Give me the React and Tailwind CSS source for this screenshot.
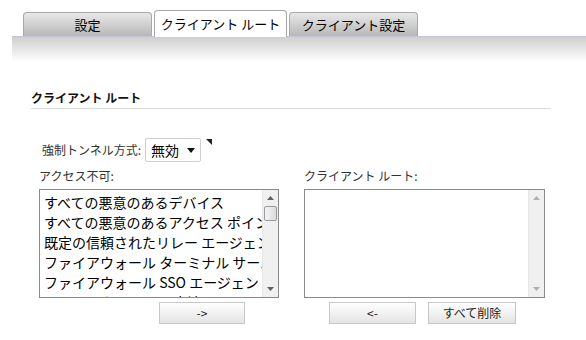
import React from 'react';

const font = { fontFamily: '"Noto Sans CJK JP", "Noto Sans", sans-serif' };

const Tab = ({ label, active }) => (
    <div
        className={
            active
                ? 'h-[27px] w-[133px] -mb-px flex items-center justify-center rounded-t-[4px] border border-b-0 border-[#a8a8a8] bg-white text-[13px] text-black z-10'
                : 'h-[24px] w-[129px] flex items-center justify-center rounded-t-[4px] border border-b-0 border-[#a8a8a8] bg-gradient-to-b from-[#e8e8e8] to-[#b8b8b8] text-[13px] text-black'
        }
    >
        {label}
    </div>
);

const ScrollBar = ({ thumb }) => (
    <div className="w-[16px] h-full flex flex-col items-center bg-[#f0f0f0] border-l border-[#e6e6e6]">
        <div className="h-[16px] flex items-center justify-center">
            <svg width="7" height="4" viewBox="0 0 7 4"><path d="M0 4 L3.5 0 L7 4 Z" fill={thumb ? '#606060' : '#b0b0b0'} /></svg>
        </div>
        {thumb && <div className="w-[13px] h-[15px] rounded-[2px] border border-[#9a9a9a] bg-gradient-to-r from-[#f4f4f4] to-[#dcdcdc]" />}
        <div className="flex-1" />
        <div className="h-[16px] flex items-center justify-center">
            <svg width="7" height="4" viewBox="0 0 7 4"><path d="M0 0 L3.5 4 L7 0 Z" fill={thumb ? '#606060' : '#b0b0b0'} /></svg>
        </div>
    </div>
);

const Button = ({ label, w }) => (
    <div className={`${w} h-[22px] flex items-center justify-center border border-[#c8c8c8] bg-gradient-to-b from-white to-[#e4e4e4] text-[12px] text-[#222]`}>
        {label}
    </div>
);

const items = [
    'すべての悪意のあるデバイス',
    'すべての悪意のあるアクセス ポイント',
    '既定の信頼されたリレー エージェント',
    'ファイアウォール ターミナル サーバ',
    'ファイアウォール SSO エージェント',
];

export default function App() {
    return (
        <div className="w-[586px] h-[340px] bg-white overflow-hidden" style={font}>
            {/* tabs */}
            <div className="flex items-end gap-[2px] pl-[23px] pt-[10px]">
                <Tab label="設定" />
                <Tab label="クライアント ルート" active />
                <Tab label="クライアント設定" />
            </div>
            <div className="ml-[12px] h-[26px] border-t border-[#c4c4d4] bg-gradient-to-b from-[#cfcfcf] to-white" />

            {/* section */}
            <div className="ml-[31px] mr-[35px] mt-[28px]">
                <div className="text-[12px] font-bold text-[#111] pb-[2px] border-b border-[#dcdcdc] leading-[16px]">クライアント ルート</div>

                <div className="flex items-center mt-[29px] ml-[11px]">
                    <span className="text-[12px] text-[#333] mr-[4px]">強制トンネル方式:</span>
                    <div className="w-[56px] h-[24px] flex items-center justify-between border border-[#cfcfcf] rounded-[2px] px-[5px] text-[14px] text-black">
                        <span>無効</span>
                        <svg width="8" height="5" viewBox="0 0 8 5"><path d="M0 0 L8 0 L4 5 Z" fill="#111" /></svg>
                    </div>
                    <svg className="ml-[5px] self-start mt-[1px]" width="6" height="6" viewBox="0 0 6 6"><path d="M0 0 L6 0 L6 6 Z" fill="#222" /></svg>
                </div>

                <div className="flex mt-[6px] ml-[8px] gap-[25px]">
                    <div className="flex flex-col">
                        <span className="text-[12px] text-[#333] leading-[16px]">アクセス不可:</span>
                        <div className="mt-[5px] w-[240px] h-[109px] flex border border-[#8a8a8a] overflow-hidden">
                            <div className="flex-1 overflow-hidden pl-[4px] pt-[2px]">
                                {items.map((t) => (
                                    <div key={t} className="text-[14px] leading-[20px] text-black whitespace-nowrap">{t}</div>
                                ))}
                                <div className="text-[14px] leading-[20px] text-black whitespace-nowrap">ファイアウォール 設定済み</div>
                            </div>
                            <ScrollBar thumb />
                        </div>
                        <div className="mt-[4px] ml-[120px]">
                            <Button label="->" w="w-[86px]" />
                        </div>
                    </div>
                    <div className="flex flex-col">
                        <span className="text-[12px] text-[#333] leading-[16px]">クライアント ルート:</span>
                        <div className="mt-[5px] w-[241px] h-[109px] flex border border-[#8a8a8a]">
                            <div className="flex-1" />
                            <ScrollBar />
                        </div>
                        <div className="mt-[4px] ml-[25px] flex gap-[12px]">
                            <Button label="<-" w="w-[87px]" />
                            <Button label="すべて削除" w="w-[88px]" />
                        </div>
                    </div>
                </div>
            </div>
        </div>
    );
}
